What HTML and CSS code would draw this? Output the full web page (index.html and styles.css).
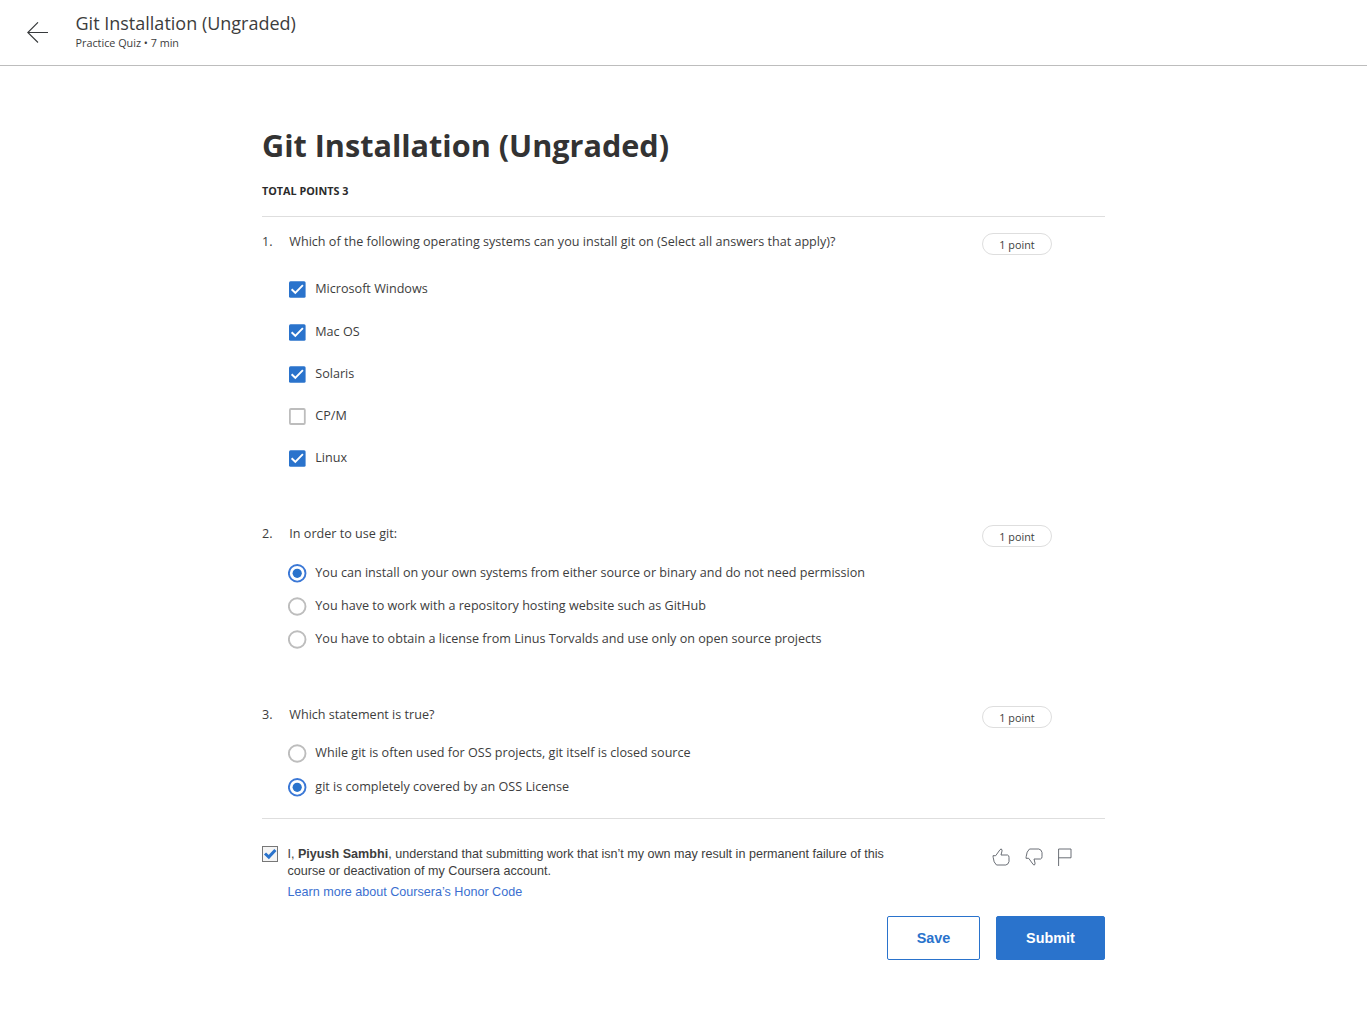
FILE: index.html
```html
<!DOCTYPE html>
<html lang="en">
<head>
<meta charset="utf-8">
<title>Git Installation (Ungraded)</title>
<link rel="stylesheet" href="styles.css">
</head>
<body>
<svg class="defs" aria-hidden="true">
  <symbol id="checked" viewBox="0 0 17 17"><rect x="0" y=".3" width="16.6" height="16.4" rx="1.5" fill="#2a73cc"/><path d="M2.600 8.300l3.700 3.500 7.600-7.700" fill="none" stroke="#fff" stroke-width="1.9"/></symbol>
  <symbol id="unchecked" viewBox="0 0 17 17"><rect x=".9" y="1" width="14.900" height="15" rx="1" fill="#fff" stroke="#bdbdbd" stroke-width="1.8"/></symbol>
  <symbol id="radio-on" viewBox="0 0 19 19"><circle cx="9.2" cy="9.300" r="8.3" fill="#fff" stroke="#3b78d6" stroke-width="1.9"/><circle cx="9.2" cy="9.300" r="4.600" fill="#2a73cc"/></symbol>
  <symbol id="radio-off" viewBox="0 0 19 19"><circle cx="9.2" cy="9.500" r="8.3" fill="#fff" stroke="#bdbdbd" stroke-width="1.9"/></symbol>
</svg>
<header class="topbar">
  <svg class="back" width="22" height="22" viewBox="0 0 22 22"><path d="M11 .3L.8 10.500l10.200 10M.8 10.500H21" /></svg>
  <div>
    <div class="topbar-title">Git Installation (Ungraded)</div>
    <div class="topbar-sub">Practice Quiz • 7 min</div>
  </div>
</header>
<main class="quiz">
  <h1 class="title">Git Installation (Ungraded)</h1>
  <div class="total">TOTAL POINTS 3</div>
  <div class="questions">
    <section class="question">
      <div class="number">1.</div>
      <div class="body">
        <div class="prompt">Which of the following operating systems can you install git on (Select all answers that apply)?</div>
        <div class="options checks">
          <label class="option"><svg class="box"><use href="#checked"/></svg>Microsoft Windows</label>
          <label class="option"><svg class="box"><use href="#checked"/></svg>Mac OS</label>
          <label class="option"><svg class="box"><use href="#checked"/></svg>Solaris</label>
          <label class="option"><svg class="box"><use href="#unchecked"/></svg>CP/M</label>
          <label class="option"><svg class="box"><use href="#checked"/></svg>Linux</label>
        </div>
      </div>
      <div class="points">1 point</div>
    </section>
    <section class="question">
      <div class="number">2.</div>
      <div class="body">
        <div class="prompt">In order to use git:</div>
        <div class="options radios">
          <label class="option"><svg class="radio"><use href="#radio-on"/></svg>You can install on your own systems from either source or binary and do not need permission</label>
          <label class="option"><svg class="radio"><use href="#radio-off"/></svg>You have to work with a repository hosting website such as GitHub</label>
          <label class="option"><svg class="radio"><use href="#radio-off"/></svg>You have to obtain a license from Linus Torvalds and use only on open source projects</label>
        </div>
      </div>
      <div class="points">1 point</div>
    </section>
    <section class="question">
      <div class="number">3.</div>
      <div class="body">
        <div class="prompt">Which statement is true?</div>
        <div class="options radios pair">
          <label class="option"><svg class="radio"><use href="#radio-off"/></svg>While git is often used for OSS projects, git itself is closed source</label>
          <label class="option"><svg class="radio"><use href="#radio-on"/></svg>git is completely covered by an OSS License</label>
        </div>
      </div>
      <div class="points">1 point</div>
    </section>
  </div>
  <div class="honor">
    <svg class="agree" width="16" height="16" viewBox="0 0 16 16"><rect x=".5" y=".5" width="15" height="15" fill="#f5f5f5" stroke="#777"/><path d="M3 7.500l3.800 3.600 6.600-7.200" fill="none" stroke="#2a73cc" stroke-width="3"/></svg>
    <div class="pledge">
      <p>I, <b>Piyush Sambhi</b>, understand that submitting work that isn’t my own may result in permanent failure of this<br>course or deactivation of my Coursera account.</p>
      <a class="link">Learn more about Coursera’s Honor Code</a>
    </div>
    <div class="feedback">
      <svg width="18" height="18" viewBox="0 0 18 18"><path d="M1 7.700h2.700L8 1.700Q9.500 0 10 2v1L9 7h6.500q1.800.6 1.500 2.500v4q-.5 3-3.200 3.500H4.500Q1.500 14.500 1.200 9.500z"/></svg>
      <svg width="18" height="18" viewBox="0 0 18 18"><path d="M1 10.300h2.700l4.500 6.200q1.300 1.400 1.800-.5v-1L9 11h6.500q1.800-.6 1.500-2.500v-4Q16.500 1.500 13.800 1H4.500Q1.500 3.500 1.200 8.500z"/></svg>
      <svg width="14" height="18" viewBox="0 0 14 18"><path d="M.6 18V1h12.400v8.800H.6"/></svg>
    </div>
  </div>
  <div class="actions">
    <button class="btn save">Save</button>
    <button class="btn submit">Submit</button>
  </div>
</main>
</body>
</html>
```
FILE: styles.css
```css
* { box-sizing: border-box; }
body { margin: 0; background: #fff; color: #3d3d3d; font: 12.6px/19px "Open Sans", sans-serif; }
svg { display: block; flex: none; }
.defs { width: 0; height: 0; }
.topbar { display: flex; height: 66px; padding: 12px 0 0 27px; gap: 26.500px; border-bottom: 1px solid #bdbdbd; }
.back { margin-top: 9.500px; fill: none; stroke: #373a3c; stroke-width: 1.1; }
.topbar-title { font-size: 18px; line-height: 23px; }
.topbar-sub { font-size: 10.800px; line-height: 16px; }
.quiz { width: 843px; margin-left: 262px; padding-top: 59px; }
.title { margin: 0; font-size: 30.600px; line-height: 40px; color: #333; }
.total { margin-top: 17px; font-size: 10.800px; line-height: 17px; font-weight: 700; color: #2b2b2b; }
.questions { margin-top: 17px; border-top: 1px solid #dedede; border-bottom: 1px solid #dedede; padding: 15px 53px 15px 0; }
.question { display: flex; align-items: flex-start; }
.question + .question { margin-top: 45.450px; }
.question + .question + .question { margin-top: 49.700px; }
.number { width: 27.300px; }
.body { flex: 1; }
.checks { margin-top: 16.850px; }
.checks .option { height: 42.200px; }
.radios { margin-top: 12.700px; }
.radios .option { height: 33.100px; }
.pair { margin-top: 12px; }
.pair .option { height: 33.600px; }
.option { display: flex; align-items: center; }
.box { width: 17px; height: 17px; margin: 2px 9.300px 0 -.3px; }
.radio { width: 19px; height: 19px; margin: 2px 8.300px 0 -1.300px; }
.points { width: 70px; height: 22px; margin-top: 1px; border: 1px solid #dedede; border-radius: 11px; font-size: 10.800px; line-height: 22px; text-align: center; }
.honor { display: flex; margin-top: 26.500px; padding-right: 33px; font: 12.590px/17px "Liberation Sans", Arial, sans-serif; }
.agree { margin-top: .5px; }
.pledge { margin-left: 9.500px; flex: 1; white-space: nowrap; }
.pledge p { margin: 0 0 4px; }
.link { color: #3b6fd0; }
.feedback { display: flex; gap: 15px; margin-top: 2.500px; fill: none; stroke: #5a5f66; stroke-width: .9; }
.actions { display: flex; justify-content: flex-end; gap: 16px; margin-top: 15.500px; }
.btn { height: 44px; padding: 0; border: 1px solid #2a73cc; border-radius: 2px; font: bold 14.400px "Liberation Sans", Arial, sans-serif; }
.save { width: 93px; background: #fff; color: #2a73cc; }
.submit { width: 109px; background: #2a73cc; color: #fff; }
```
